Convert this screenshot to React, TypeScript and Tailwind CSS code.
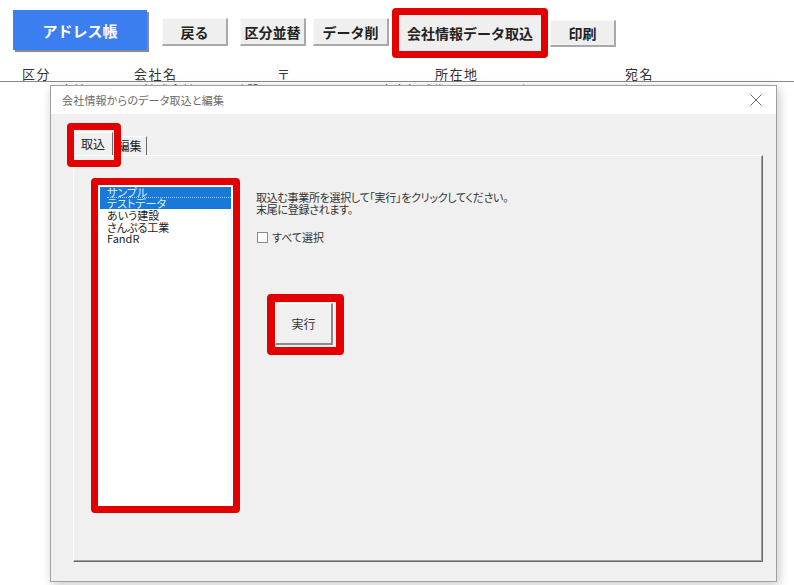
import React from "react";

const jp = "font-['Noto_Sans_CJK_JP','Noto_Sans',sans-serif]";

function GrayBtn({ label, w, h, mt, ml }: { label: string; w: string; h: string; mt: string; ml: string }) {
  return (
    <div
      className={`${w} ${h} ${mt} ${ml} bg-[#efefef] border-t border-l border-[#f8f8f8] border-r-2 border-b-2 border-r-[#a9a9a9] border-b-[#a9a9a9] flex items-center justify-center text-[14px] font-bold text-[#222] leading-none`}
    >
      {label}
    </div>
  );
}

export default function App() {
  return (
    <div className={`relative w-[794px] h-[585px] bg-white overflow-hidden ${jp}`}>
      {/* toolbar */}
      <div className="flex items-start pl-[13px]">
        <div className="w-[134px] h-[40px] mt-[10px] bg-[#3b7ef0] shadow-[2px_2px_0_#8a8a8a] flex items-center justify-center text-white text-[15px] font-bold leading-none">
          アドレス帳
        </div>
        <GrayBtn label="戻る" w="w-[66px]" h="h-[28px]" mt="mt-[18px]" ml="ml-[15px]" />
        <GrayBtn label="区分並替" w="w-[66px]" h="h-[28px]" mt="mt-[18px]" ml="ml-[12px]" />
        <GrayBtn label="データ削" w="w-[76px]" h="h-[28px]" mt="mt-[18px]" ml="ml-[7px]" />
        <div className="ml-[3px] mt-[8px] w-[156px] h-[50px] border-[7px] border-[#e30000] rounded-[4px] bg-[#efefef] flex items-center justify-center text-[14px] font-bold text-[#222] leading-none">
          会社情報データ取込
        </div>
        <GrayBtn label="印刷" w="w-[66px]" h="h-[27px]" mt="mt-[20px]" ml="ml-[2px]" />
      </div>

      {/* header row */}
      <div className="mt-[9px] h-[15px] border-b border-[#8a8a8a] flex pl-[22px] text-[13px] leading-[13px] tracking-[1.5px] text-[#333]">
        <div className="w-[112px]">区分</div>
        <div className="w-[143px]">会社名</div>
        <div className="w-[158px]">〒</div>
        <div className="w-[190px]">所在地</div>
        <div>宛名</div>
      </div>
      {/* data row peeking behind dialog */}
      <div className="mt-[1px] h-[3px] overflow-hidden flex text-[13px] leading-[14px] text-[#555]">
        <div className="w-[60px]" />
        <div className="w-[83px]">本社</div>
        <div className="w-[184px]">株式会社あいう建設</div>
        <div className="w-[53px]">123-4567</div>
        <div className="w-[133px]">東京都千代田区</div>
        <div className="w-[107px]">ビル5F</div>
        <div>山田</div>
      </div>

      {/* dialog */}
      <div className="absolute left-[50px] top-[85px] w-[727px] h-[497px] border border-[#a0a0a0] bg-[#f0f0f0] shadow-[2px_3px_10px_rgba(0,0,0,0.22)] flex flex-col">
        <div className="h-[28px] bg-white flex items-center justify-between pl-[11px] pr-[10px]">
          <span className="text-[11px] text-[#6a6a6a] [font-feature-settings:'palt'] tracking-[0.2px]">会社情報からのデータ取込と編集</span>
          <svg width="12" height="12" viewBox="0 0 12 12" className="mr-[4px]">
            <path d="M0.5 0.5 L11.5 11.5 M11.5 0.5 L0.5 11.5" stroke="#6a6a6a" strokeWidth="1" />
          </svg>
        </div>

        <div className="relative flex-1 pl-[22px] pt-[18px]">
          {/* tabs */}
          <div className="flex items-end h-[23px]">
            <div className="w-[40px] h-[23px] border-t border-l border-white border-r border-r-[#696969] flex items-center justify-center text-[12px] text-[#222] [font-feature-settings:'palt']">
              取込
            </div>
            <div className="w-[34px] h-[19px] border-t border-white border-r border-r-[#696969] flex items-center justify-center text-[12px] text-[#222] [font-feature-settings:'palt']">
              編集
            </div>
          </div>

          {/* tab page */}
          <div className="w-[690px] h-[407px] border-t border-l border-white border-r border-b border-r-[#696969] border-b-[#696969] shadow-[inset_-1px_-1px_0_#a0a0a0] pl-[17px] pt-[22px] flex items-start">
            {/* listbox */}
            <div className="w-[149px] h-[335px] border-[7px] border-[#e30000] rounded-[4px] bg-white p-[2px]">
              <div className="bg-[#1979d9] text-[#dcefff] text-[11px] leading-[11px] [font-feature-settings:'palt'] pl-[7px]">
                <div className="h-[11px] border-b border-dotted border-[#a8d0f5]">サンプル</div>
                <div className="h-[11px]">テストデータ</div>
              </div>
              <div className="text-[#222] text-[11px] leading-[11.5px] [font-feature-settings:'palt'] pl-[7px] mt-[1px]">
                <div>あいう建設</div>
                <div>さんぷる工業</div>
                <div>FandR</div>
              </div>
            </div>

            {/* right column */}
            <div className="ml-[16px] mt-[13px] flex flex-col items-start">
              <div className="text-[11px] leading-[12px] text-[#333] [font-feature-settings:'palt'] tracking-[-0.3px]">
                <div>取込む事業所を選択して「実行」をクリックしてください。</div>
                <div>末尾に登録されます。</div>
              </div>
              <div className="mt-[17px] flex items-center h-[11px]">
                <div className="w-[11px] h-[11px] ml-[1px] border border-[#8c8c8c] bg-white" />
                <span className="ml-[4px] text-[11px] leading-[11px] text-[#333] [font-feature-settings:'palt']">すべて選択</span>
              </div>
              <div className="ml-[11px] mt-[51px] w-[77px] h-[61px] border-[8px] border-[#e30000] rounded-[4px] bg-[#f0f0f0]">
                <div className="w-[58px] h-[42px] mt-[1px] bg-[#f0f0f0] border-t border-l border-white border-r-2 border-b-2 border-r-[#8a8a8a] border-b-[#8a8a8a] flex items-center justify-center text-[12px] text-[#333]">
                  実行
                </div>
              </div>
            </div>
          </div>

          {/* red highlight over tab */}
          <div className="absolute left-[16px] top-[9px] w-[54px] h-[44px] border-[7px] border-[#e30000] rounded-[4px]" />
        </div>
      </div>
    </div>
  );
}
